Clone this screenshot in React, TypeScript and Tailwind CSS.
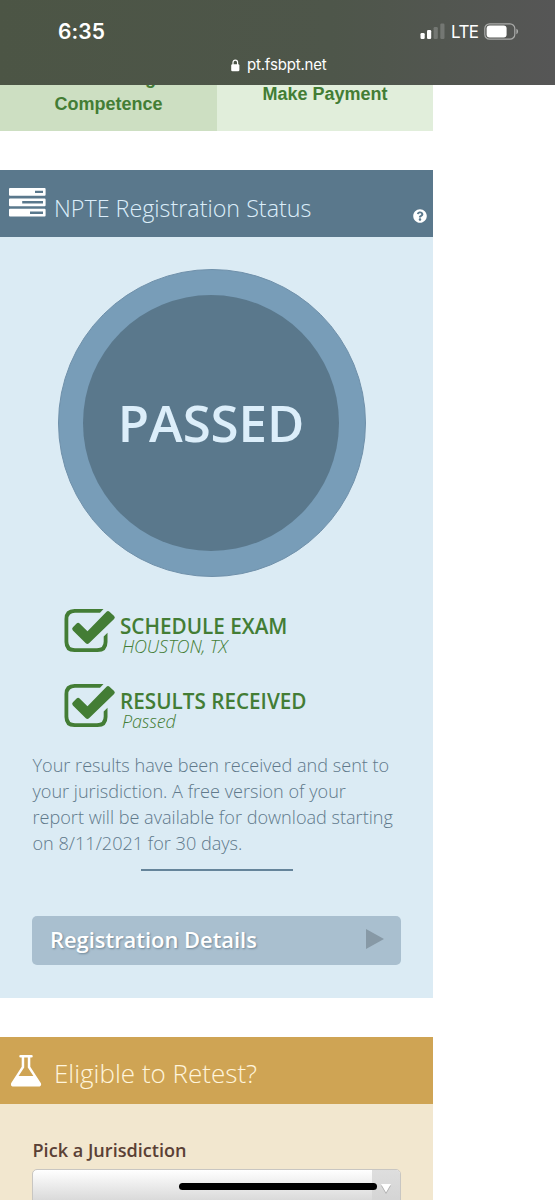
import React from "react";
import { FaQuestionCircle } from "react-icons/fa";

function StatusBar() {
  return (
    <header className="relative z-10 h-[85px] w-full shrink-0 bg-linear-to-r from-[#4c5545] via-[#4e564a] via-60% to-[#565656] font-['Inter',sans-serif] text-white">
      <div className="flex h-[50px] items-start justify-between pt-[18px] pr-9 pl-[58px]">
        <span className="text-[21px] leading-7 font-semibold tracking-[0.1px]">6:35</span>
        <div className="flex items-start pt-[5px]">
          <svg width="26" height="17" viewBox="0 0 26 17" fill="white">
            <rect x="0.5" y="10" width="4.2" height="6" rx="1.2" />
            <rect x="7" y="7" width="4.2" height="9" rx="1.2" />
            <rect x="13.6" y="4" width="4.2" height="12" rx="1.2" opacity=".2" />
            <rect x="20.3" y="0.5" width="4.2" height="15.5" rx="1.2" opacity=".2" />
          </svg>
          <span className="ml-[5px] w-[33px] text-[17px] leading-[19px] tracking-[-0.6px]">LTE</span>
          <svg width="35" height="17" viewBox="0 0 35 17">
            <rect x="0.8" y="0.8" width="30" height="15.4" rx="4.8" fill="none" stroke="white" strokeOpacity=".5" strokeWidth="1.2" />
            <rect x="2.6" y="2.6" width="20" height="11.8" rx="3" fill="white" />
            <path d="M32.4 5.8c2.2.7 2.2 4.7 0 5.4z" fill="white" opacity=".5" />
          </svg>
        </div>
      </div>
      <div className="flex items-start pl-[231px]">
        <svg className="mt-[9px]" width="9" height="13" viewBox="0 0 9 13">
          <rect x="0.2" y="5.2" width="8.2" height="7" rx="1.3" fill="white" />
          <path d="M2 6V3.4a2.3 2.3 0 0 1 4.6 0V6" fill="none" stroke="white" strokeWidth="1.2" />
        </svg>
        <span className="ml-[7px] pt-[5px] text-[15px] leading-5 tracking-[-0.18px] whitespace-nowrap">pt.fsbpt.net</span>
      </div>
    </header>
  );
}

function QuickLinks() {
  return (
    <nav className="-mt-[20px] flex h-[66px] shrink-0 text-center font-['Liberation_Sans',sans-serif] text-[18px] leading-[26px] font-bold text-[#437d35]">
      <a className="w-[217px] bg-[#cddfc2]">
        Continuing
        <br />
        Competence
      </a>
      <a className="w-[216px] bg-[#e1eedb] pt-[16px]">Make Payment</a>
    </nav>
  );
}

function TasksIcon() {
  return (
    <svg width="37" height="30" viewBox="0 0 37 30" fill="white" fillRule="evenodd">
      <path d="M1 0h34.6a1 1 0 0 1 1 1v5.800a1 1 0 0 1-1 1H1a1 1 0 0 1-1-1V1a1 1 0 0 1 1-1zM26 2.700v2.400h8V2.700z" />
      <path d="M1 10.400h34.600a1 1 0 0 1 1 1v5.800a1 1 0 0 1-1 1H1a1 1 0 0 1-1-1v-5.800a1 1 0 0 1 1-1zM13.200 13.100v2.400H34v-2.400z" />
      <path d="M1 20.800h34.600a1 1 0 0 1 1 1v5.800a1 1 0 0 1-1 1H1a1 1 0 0 1-1-1v-5.800a1 1 0 0 1 1-1zM21 23.500v2.400h13v-2.400z" />
    </svg>
  );
}

function FlaskIcon() {
  return (
    <svg width="31" height="32" viewBox="0 0 31 32" fill="white" fillRule="evenodd">
      <path d="M9.500 0h11a1.200 1.200 0 0 1 0 2.500h-1.200v9.300l10.300 16c1.300 2 .1 3.700-2 3.700H2.400c-2.100 0-3.300-1.700-2-3.700l10.300-16V2.500H9.500a1.200 1.200 0 0 1 0-2.500zM13.200 2.500v10L7.600 21h14.800l-5.600-8.500v-10z" />
    </svg>
  );
}

function Step({ title, note }: { title: string; note: string }) {
  return (
    <li className="flex h-[75px] items-start">
      <svg width="52" height="46" viewBox="0 0 52 46" fill="#437d35">
        <path d="M39.500 0L36 3.800H11Q4.300 3.800 4.300 10.500V32.500Q4.300 39.300 11 39.300H33Q39.700 39.300 39.700 32.500V27.500L43.500 23.700V33Q43.500 43 33.500 43H10.500Q.5 43 .5 33V10Q.5 0 10.500 0z" />
        <path d="M8.900 18.200l3.700-3.700q1.500-1.500 3 0l7.900 7.700L42.500 2.800q1.500-1.500 3 0l4.600 4.100q1.500 1.500 0 3L25 34.300q-1.600 1.500-3.200 0L8.900 21.400q-1.600-1.600 0-3.200z" />
      </svg>
      <div className="pl-1">
        <div className="pt-[7px] text-[20.700px] leading-[21px] font-semibold whitespace-nowrap">{title}</div>
        <div className="pl-[2px] text-[18px] leading-[19px] font-light tracking-[-0.15px] italic">{note}</div>
      </div>
    </li>
  );
}

export default function App() {
  return (
    <div className="flex h-[1200px] w-[555px] flex-col overflow-hidden bg-white font-['Open_Sans',sans-serif]">
      <StatusBar />
      <QuickLinks />
      <section className="mt-[39px] flex h-[828px] w-[433px] shrink-0 flex-col bg-[#dbebf4]">
        <div className="flex h-[67px] shrink-0 items-start bg-[#5a788c] pl-[9px] text-[#dceefa]">
          <div className="mt-[18px] w-[45px]">
            <TasksIcon />
          </div>
          <h2 className="mt-[20px] w-[359px] text-[23.300px] leading-9 font-light whitespace-nowrap">NPTE Registration Status</h2>
          <FaQuestionCircle className="mt-[39px] text-white" size={14} />
        </div>
        <div className="mt-[32px] ml-[58px] flex size-[308px] shrink-0 items-center rounded-full border border-[#6f90aa] bg-[#789db8] pl-[24px]">
          <div className="flex size-[256px] items-center justify-center rounded-full bg-[#5a788c]">
            <span className="-mt-[3px] text-[51px] leading-[60px] font-semibold tracking-[-0.1px] text-[#dceefa]">PASSED</span>
          </div>
        </div>
        <ul className="mt-[32px] ml-[64px] text-[#437d35]">
          <Step title="SCHEDULE EXAM" note="HOUSTON, TX" />
          <Step title="RESULTS RECEIVED" note="Passed" />
        </ul>
        <p className="-mt-[7px] ml-[32.500px] text-[18.100px] leading-[26px] font-light whitespace-nowrap text-[#60798b]">
          Your results have been received and sent to
          <br />
          your jurisdiction. A free version of your
          <br />
          report will be available for download starting
          <br />
          on 8/11/2021 for 30 days.
        </p>
        <div className="mt-[13px] ml-[141px] h-[1.500px] w-[152px] shrink-0 bg-[#65849a]" />
        <button className="mt-[45px] ml-[32px] flex h-[49px] w-[369px] shrink-0 items-center justify-between rounded-[5px] bg-[#a9bfcf] pr-[17px] pl-[18px] text-white">
          <span className="-mt-px text-[21.900px] leading-8 font-semibold [text-shadow:1px_1px_2px_#6f8798]">Registration Details</span>
          <svg width="18" height="20" viewBox="0 0 18 20" className="-mt-[3px]">
            <path d="M0 0L18 10L0 20z" fill="#8799a6" />
          </svg>
        </button>
      </section>
      <section className="mt-[39px] h-[163px] w-[433px] shrink-0 bg-[#f2e7cf]">
        <div className="flex h-[67px] items-start bg-[#cfa454] pl-[11px]">
          <div className="mt-[18px] w-[43px]">
            <FlaskIcon />
          </div>
          <h2 className="mt-[18px] text-[26px] leading-9 font-light whitespace-nowrap text-[#fff5dc]">Eligible to Retest?</h2>
        </div>
        <label className="block pt-[34px] pl-[32.500px] text-[18.100px] leading-6 font-semibold text-[#5a4035]">Pick a Jurisdiction</label>
        <div className="mt-[7px] ml-[32px] flex h-[50px] w-[369px] overflow-hidden rounded-[5px] border border-[#c8c6c2] bg-linear-to-b from-white to-[#c4c4c4]">
          <div className="flex-1" />
          <div className="flex w-[28px] justify-center bg-linear-to-b from-[#dedede] to-[#cfcfcf] pt-[14px]">
            <svg width="10" height="10" viewBox="0 0 10 10">
              <path d="M0 1.500h10L5 10z" fill="#aaa" />
              <path d="M0 0h10L5 8.500z" fill="white" />
            </svg>
          </div>
        </div>
      </section>
      <div className="absolute top-[1183px] left-[179px] h-[7px] w-[198px] rounded-full bg-black" />
    </div>
  );
}
